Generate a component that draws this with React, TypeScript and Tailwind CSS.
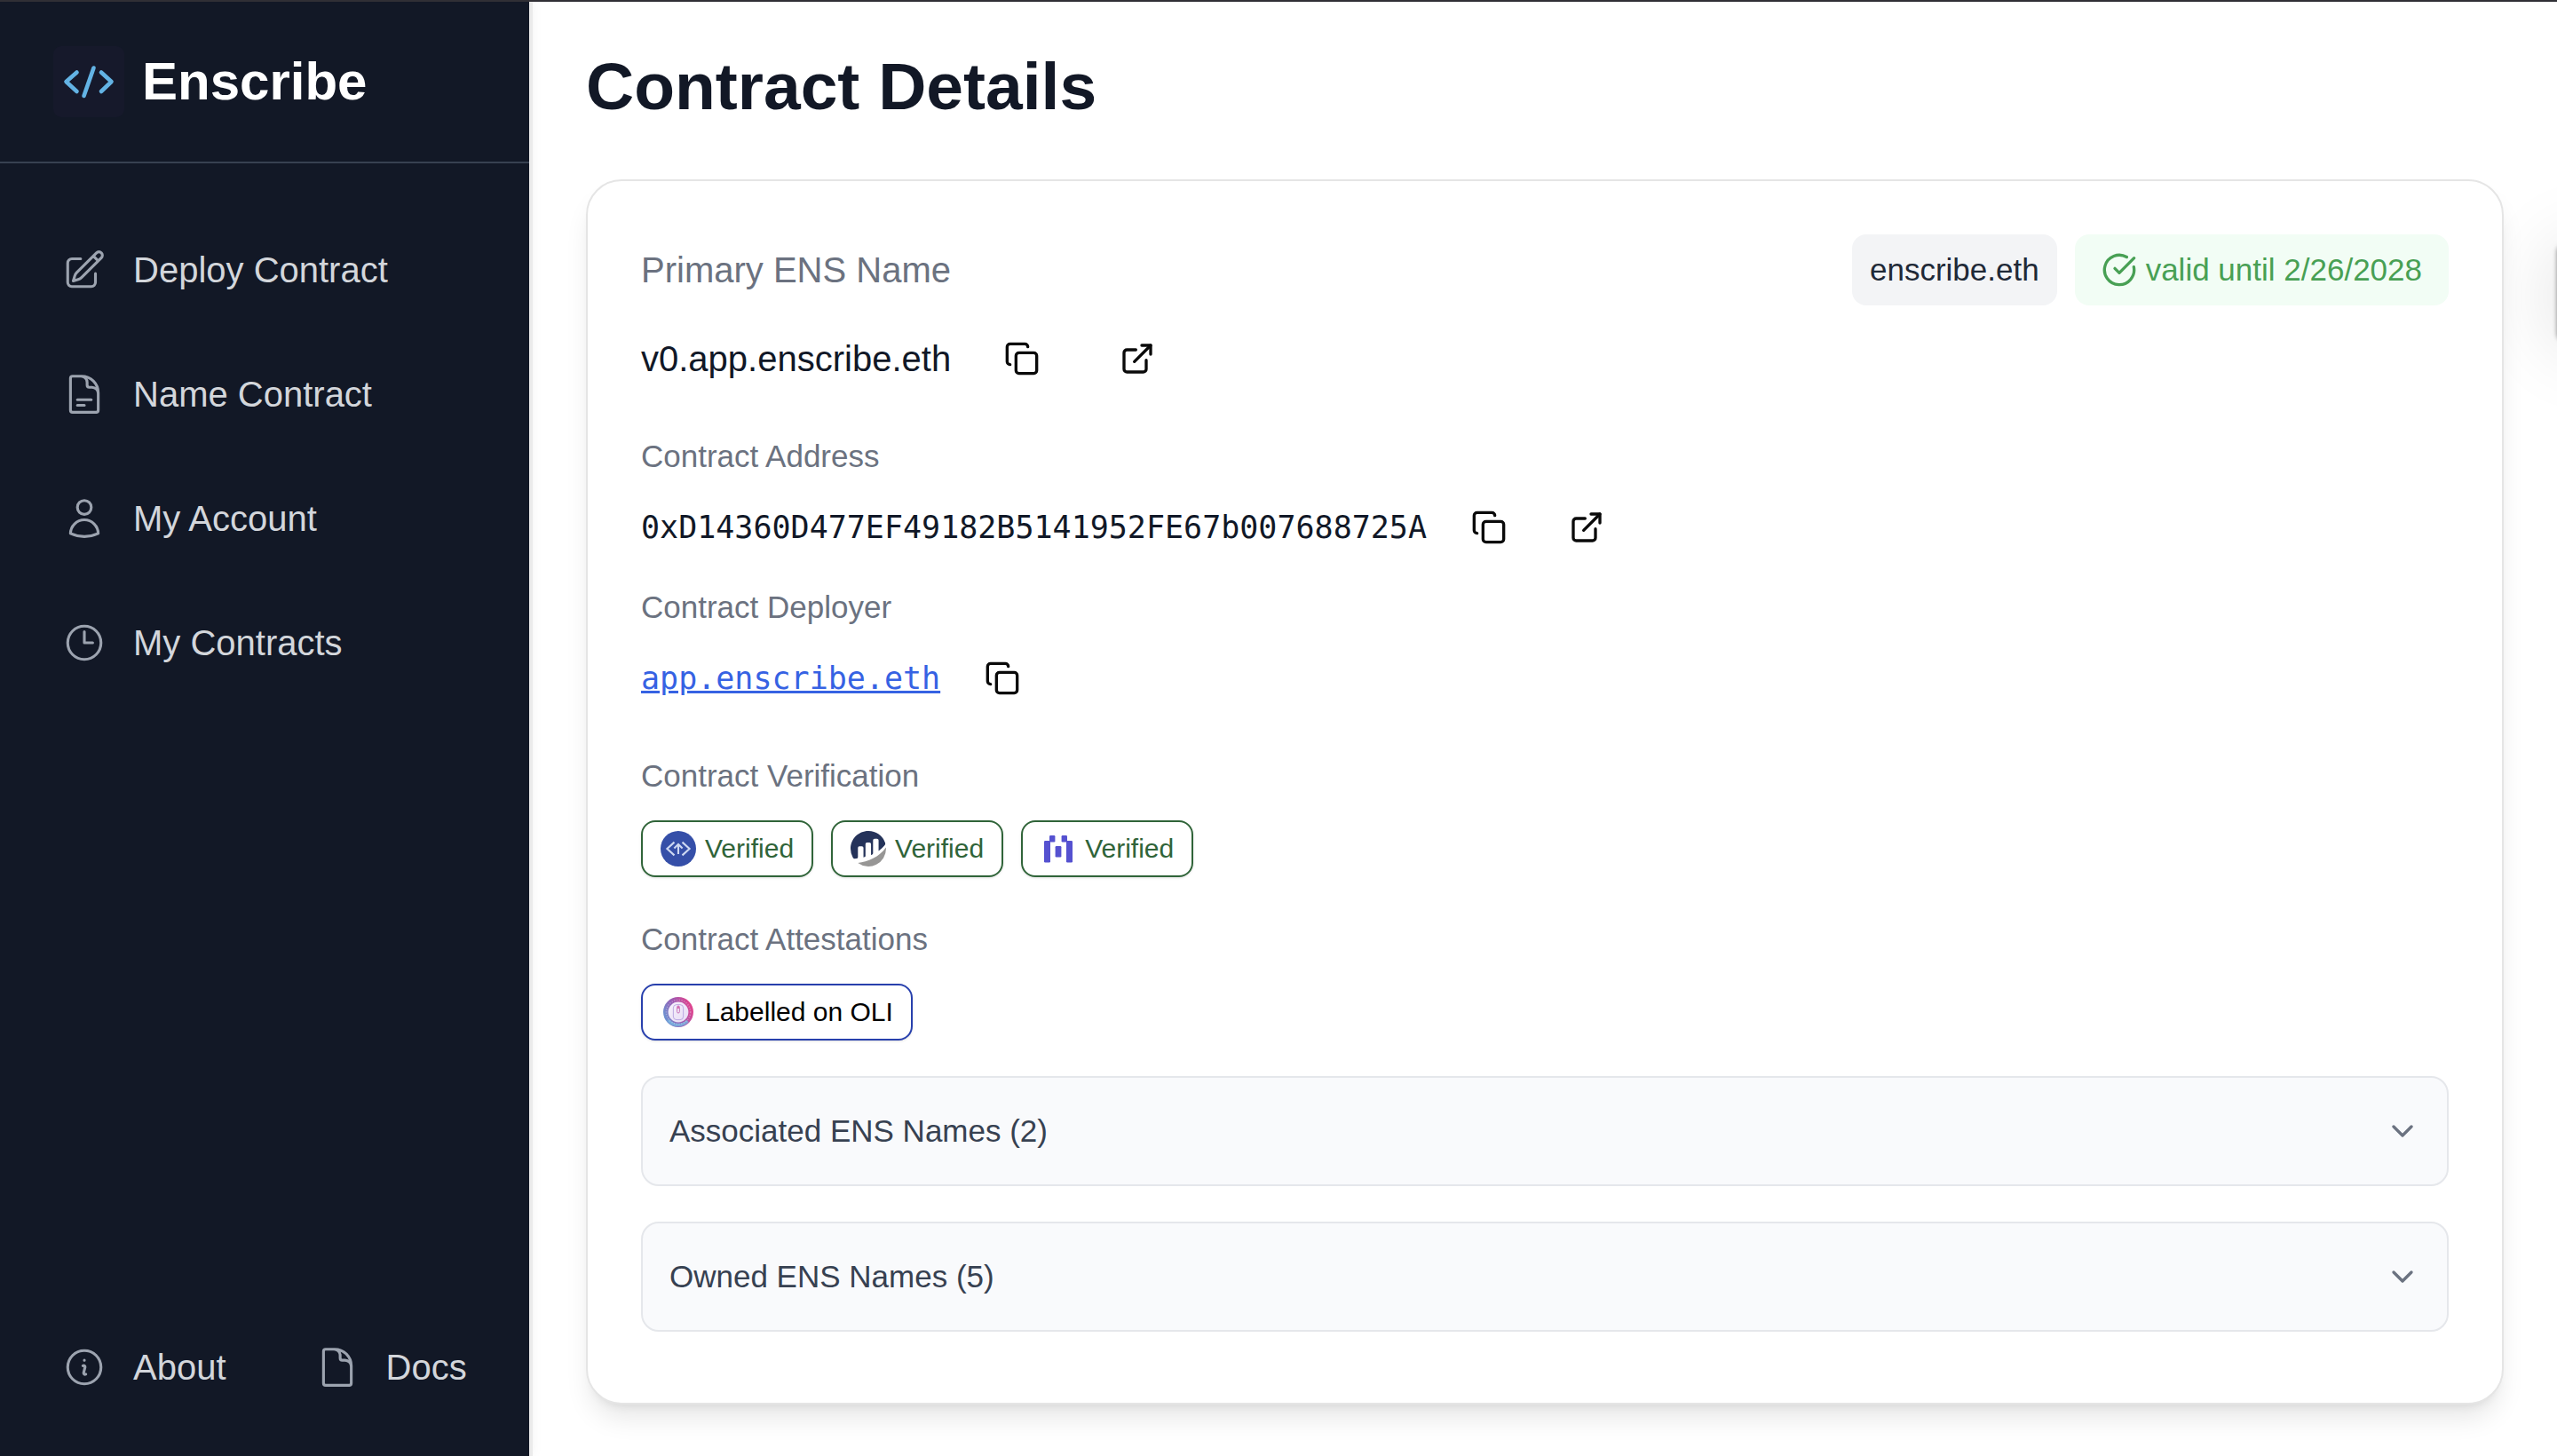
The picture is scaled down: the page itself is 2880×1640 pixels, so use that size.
import type { ReactNode } from "react";
import { ChevronDown, CircleCheckBig, Copy, ExternalLink } from "lucide-react";
import {
  HiOutlineClock,
  HiOutlineDocument,
  HiOutlineDocumentText,
  HiOutlineInformationCircle,
  HiOutlinePencilSquare,
  HiOutlineUser,
} from "react-icons/hi2";
import type { IconType } from "react-icons";

function LogoMark() {
  return (
    <svg viewBox="0 0 80 80" className="size-20 shrink-0" aria-hidden="true">
      <rect width="80" height="80" rx="9" fill="#16192b" />
      <g fill="none" stroke="#63b3e4" strokeWidth="4.6" strokeLinecap="round" strokeLinejoin="round">
        <path d="M26.5 29.5 14.5 40l12 11" />
        <path d="M54 29.5 65.5 40 54 51" />
        <path d="M45.5 24.5 34.5 56" />
      </g>
    </svg>
  );
}

function SourcifyLogo() {
  return (
    <svg viewBox="0 0 40 40" className="size-10" aria-hidden="true">
      <circle cx="20" cy="20" r="20" fill="#354fa8" />
      <g fill="none" stroke="#cdd8f2" strokeWidth="2.1">
        <path d="M15.5 12.6 7.4 20l8.1 7.4" />
        <path d="M24.5 12.6 32.6 20l-8.1 7.4" />
        <path d="M20 26V15.2" />
        <path d="m15.4 19.4 4.6-4.5 4.6 4.5" />
      </g>
    </svg>
  );
}

function EtherscanLogo() {
  return (
    <svg viewBox="0 0 294 294" className="size-10" aria-hidden="true">
      <path
        fill="#25335a"
        d="M61 139.2a12.5 12.5 0 0 1 12.57-12.5l20.82.07a12.52 12.52 0 0 1 12.52 12.52V218c2.34-.7 5.35-1.44 8.65-2.2a10.43 10.43 0 0 0 7.97-10.17v-97.58a12.52 12.52 0 0 1 12.52-12.52h20.86a12.52 12.52 0 0 1 12.52 12.52v90.5s5.22-2.11 10.3-4.26a10.45 10.45 0 0 0 6.39-9.63V76.75a12.52 12.52 0 0 1 12.52-12.52h20.86a12.52 12.52 0 0 1 12.52 12.52v88.7c18.08-13.1 36.4-28.87 50.95-47.82a21 21 0 0 0 3.33-19.6A146.3 146.3 0 0 0 146.8 0C65.1 0 0 65.8 0 146.85a146.7 146.7 0 0 0 19.4 73.4 18.6 18.6 0 0 0 17.7 9.2c3.9-.35 8.8-.84 14.6-1.5a10.4 10.4 0 0 0 9.3-10.4z"
      />
      <path
        fill="#979695"
        d="M60.6 265.3A146.6 146.6 0 0 0 293.7 146.8c0-3.4-.16-6.7-.38-10-53.6 79.9-152.5 117.3-232.7 128.5"
      />
    </svg>
  );
}

function BlockscoutLogo() {
  return (
    <svg viewBox="0 0 40 40" className="size-10" fill="#5551d0" aria-hidden="true">
      <rect x="4" y="11" width="7" height="24.4" rx="1.2" />
      <rect x="10" y="5" width="6.4" height="7.4" rx="1.2" />
      <rect x="16.6" y="17" width="6.8" height="12.4" rx="1.2" />
      <rect x="23.6" y="5" width="6.4" height="7.4" rx="1.2" />
      <rect x="29" y="11" width="7" height="24.4" rx="1.2" />
    </svg>
  );
}

function OliLogo() {
  return (
    <svg viewBox="0 0 40 40" className="size-10" aria-hidden="true">
      <defs>
        <linearGradient id="oli-ring" x1="0.1" y1="0.75" x2="0.95" y2="0.4">
          <stop offset="0" stopColor="#6f8fd0" />
          <stop offset="0.45" stopColor="#9a5cb4" />
          <stop offset="1" stopColor="#dd4590" />
        </linearGradient>
        <linearGradient id="oli-core" x1="0" y1="0" x2="1" y2="1">
          <stop offset="0" stopColor="#f8f2fc" />
          <stop offset="1" stopColor="#e6dcf5" />
        </linearGradient>
      </defs>
      <circle cx="20" cy="20" r="17" fill="url(#oli-ring)" />
      <path d="M8.5 29a14.6 14.6 0 0 0 22 1" fill="none" stroke="#76b4e0" strokeWidth="3.4" opacity="0.8" />
      <circle cx="20" cy="20" r="13.6" fill="none" stroke="#ffffff" strokeWidth="1.6" strokeDasharray="1.2 1.6" opacity="0.3" />
      <circle cx="20" cy="20" r="11.4" fill="url(#oli-core)" />
      <rect x="14.4" y="11.6" width="11.2" height="17" rx="3.6" fill="none" stroke="#b7a3e0" strokeWidth="0.9" />
      <rect x="18.6" y="13" width="2.8" height="8" rx="1.4" fill="none" stroke="#c66ab4" strokeWidth="0.9" />
      <rect x="19.3" y="13.6" width="1.4" height="2.4" fill="#cf3f97" />
    </svg>
  );
}

function NavLink({ icon: Icon, children }: { icon: IconType; children: ReactNode }) {
  return (
    <a href="#" className="flex h-25 items-center gap-[30px] rounded-xl px-[30px] text-[40px] leading-12 text-[#d3d6db]">
      <Icon className="size-[50px] shrink-0 text-[#9ca3af]" aria-hidden="true" />
      {children}
    </a>
  );
}

function CopyButton({ label }: { label: string }) {
  return (
    <button type="button" aria-label={label} className="p-5 text-[#0a0a0a]">
      <Copy className="size-10" />
    </button>
  );
}

function OpenLink({ label }: { label: string }) {
  return (
    <a href="#" aria-label={label} className="p-5 text-[#0a0a0a]">
      <ExternalLink className="size-10" />
    </a>
  );
}

function FieldLabel({ children }: { children: ReactNode }) {
  return <h2 className="text-[35px] leading-10 text-[#6b7280]">{children}</h2>;
}

function Verified({ logo }: { logo: ReactNode }) {
  return (
    <a
      href="#"
      className="flex h-16 items-center gap-2.5 rounded-2xl border-2 border-[#306439] px-5 text-[30px] leading-10 text-[#306439] shadow-sm"
    >
      {logo}
      Verified
    </a>
  );
}

function Disclosure({ children }: { children: ReactNode }) {
  return (
    <button
      type="button"
      aria-expanded="false"
      className="flex w-full items-center justify-between rounded-[20px] border-2 border-[#e5e7eb] bg-[#f9fafc] px-[30px] py-10 text-left text-[35px] leading-10 text-[#374151]"
    >
      {children}
      <ChevronDown className="size-10 text-[#6b7280]" />
    </button>
  );
}

export default function App() {
  return (
    <div className="relative flex min-h-screen overflow-hidden border-t-2 border-[#302f35] bg-white font-['Liberation_Sans',Arial,sans-serif]">
      <aside className="flex w-[600px] shrink-0 flex-col border-r-4 border-[#ebebeb] bg-[#121826] shadow-[0_0_12px_rgba(0,0,0,0.05)]">
        <div className="flex items-center gap-5 border-b-2 border-[#374151] px-[60px] py-[50px]">
          <LogoMark />
          <span className="text-[60px] leading-16 font-bold text-white">Enscribe</span>
        </div>
        <nav aria-label="Main" className="flex flex-col gap-10 px-10 pt-[70px]">
          <NavLink icon={HiOutlinePencilSquare}>Deploy Contract</NavLink>
          <NavLink icon={HiOutlineDocumentText}>Name Contract</NavLink>
          <NavLink icon={HiOutlineUser}>My Account</NavLink>
          <NavLink icon={HiOutlineClock}>My Contracts</NavLink>
        </nav>
        <nav aria-label="Help" className="mt-auto flex gap-10 px-10 pb-[50px]">
          <NavLink icon={HiOutlineInformationCircle}>About</NavLink>
          <NavLink icon={HiOutlineDocument}>Docs</NavLink>
        </nav>
      </aside>

      <div
        aria-hidden="true"
        className="absolute top-[274px] left-full h-[108px] w-20 rounded-lg shadow-[0_0_5px_rgba(0,0,0,0.45),0_4px_90px_rgba(0,0,0,0.14)]"
      />

      <main className="relative min-w-0 flex-1 px-[60px] pt-[55px] pb-14">
        <h1 className="mb-[65px] text-[75px] leading-20 font-bold text-[#121826]">Contract Details</h1>

        <article className="rounded-[40px] border-2 border-[#e5e5e5] bg-white px-[60px] pt-[60px] pb-20 shadow-[0_20px_30px_-6px_rgba(0,0,0,0.1),0_8px_12px_-8px_rgba(0,0,0,0.1)]">
          <section>
            <div className="flex items-center justify-between">
              <h2 className="text-[40px] leading-12 text-[#6b7280]">Primary ENS Name</h2>
              <div className="flex gap-5 text-[35px] leading-10">
                <span className="rounded-2xl bg-[#f3f4f6] p-5 text-[#1f2937]">enscribe.eth</span>
                <span className="flex items-center gap-2.5 rounded-2xl bg-[#f2fdf5] px-[30px] py-5 text-[#48a054]">
                  <CircleCheckBig className="size-10" />
                  valid until 2/26/2028
                </span>
              </div>
            </div>
            <div className="mt-5 flex items-center">
              <p className="mr-10 text-[40px] leading-12 text-[#111827]">v0.app.enscribe.eth</p>
              <div className="flex gap-[50px]">
                <CopyButton label="Copy ENS name" />
                <OpenLink label="Open ENS name" />
              </div>
            </div>
          </section>

          <section className="mt-[50px]">
            <FieldLabel>Contract Address</FieldLabel>
            <div className="mt-5 flex items-center gap-[30px]">
              <p className="font-['DejaVu_Sans_Mono',monospace] text-[35px] leading-10 text-[#111827]">
                0xD14360D477EF49182B5141952FE67b007688725A
              </p>
              <CopyButton label="Copy contract address" />
              <OpenLink label="Open contract address" />
            </div>
          </section>

          <section className="mt-[30px]">
            <FieldLabel>Contract Deployer</FieldLabel>
            <div className="mt-5 flex items-center gap-[30px]">
              <a
                href="#"
                className="font-['DejaVu_Sans_Mono',monospace] text-[35px] leading-10 text-[#3662e3] underline"
              >
                app.enscribe.eth
              </a>
              <CopyButton label="Copy deployer" />
            </div>
          </section>

          <section className="mt-[50px]">
            <FieldLabel>Contract Verification</FieldLabel>
            <div className="mt-[30px] flex gap-5">
              <Verified logo={<SourcifyLogo />} />
              <Verified logo={<EtherscanLogo />} />
              <Verified logo={<BlockscoutLogo />} />
            </div>
          </section>

          <section className="mt-[50px]">
            <FieldLabel>Contract Attestations</FieldLabel>
            <div className="mt-[30px] flex">
              <a
                href="#"
                className="flex h-16 items-center gap-2.5 rounded-2xl border-2 border-[#2840ad] px-5 text-[30px] leading-10 text-black shadow-sm"
              >
                <OliLogo />
                Labelled on OLI
              </a>
            </div>
          </section>

          <div className="mt-10 flex flex-col gap-10">
            <Disclosure>Associated ENS Names (2)</Disclosure>
            <Disclosure>Owned ENS Names (5)</Disclosure>
          </div>
        </article>
      </main>
    </div>
  );
}
